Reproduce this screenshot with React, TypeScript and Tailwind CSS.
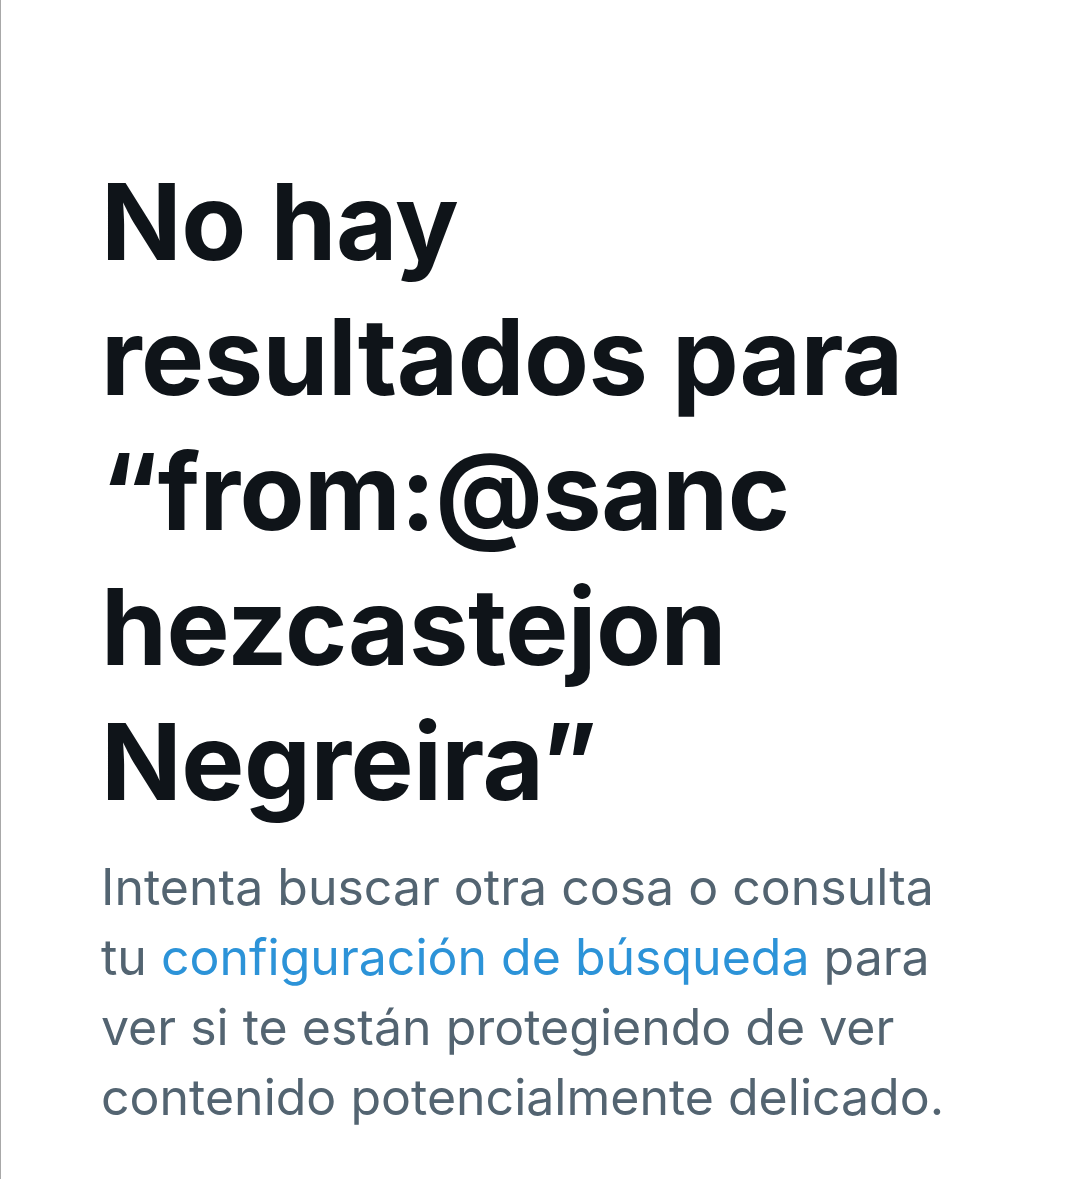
import React from 'react';

// Empty search results state
const SearchEmptyState: React.FC<{ head: string; tail: string }> = ({ head, tail }) => {
  return (
    <div className="px-[100px] pt-[154px]">
      <h1 className="text-[106px] leading-[135px] font-bold text-[#0f1419] tracking-[-0.5px] break-words">
        No hay resultados para “{head}<wbr />{tail}”
      </h1>
      <p className="mt-[23px] text-[50px] leading-[70px] text-[#536471]">
        Intenta buscar otra cosa o consulta tu{' '}
        <a href="#" className="text-[#2c93d8]">configuración de búsqueda</a>{' '}
        para ver si te están protegiendo de ver contenido potencialmente delicado.
      </p>
    </div>
  );
};

export default function App() {
  return (
    <div
      className="min-h-[1179px] w-[1080px] bg-white border-l border-[#a8a8a8]"
      style={{ fontFamily: 'Inter, "Noto Sans", sans-serif' }}
    >
      <SearchEmptyState head="from:@sanc" tail="hezcastejon Negreira" />
    </div>
  );
}
